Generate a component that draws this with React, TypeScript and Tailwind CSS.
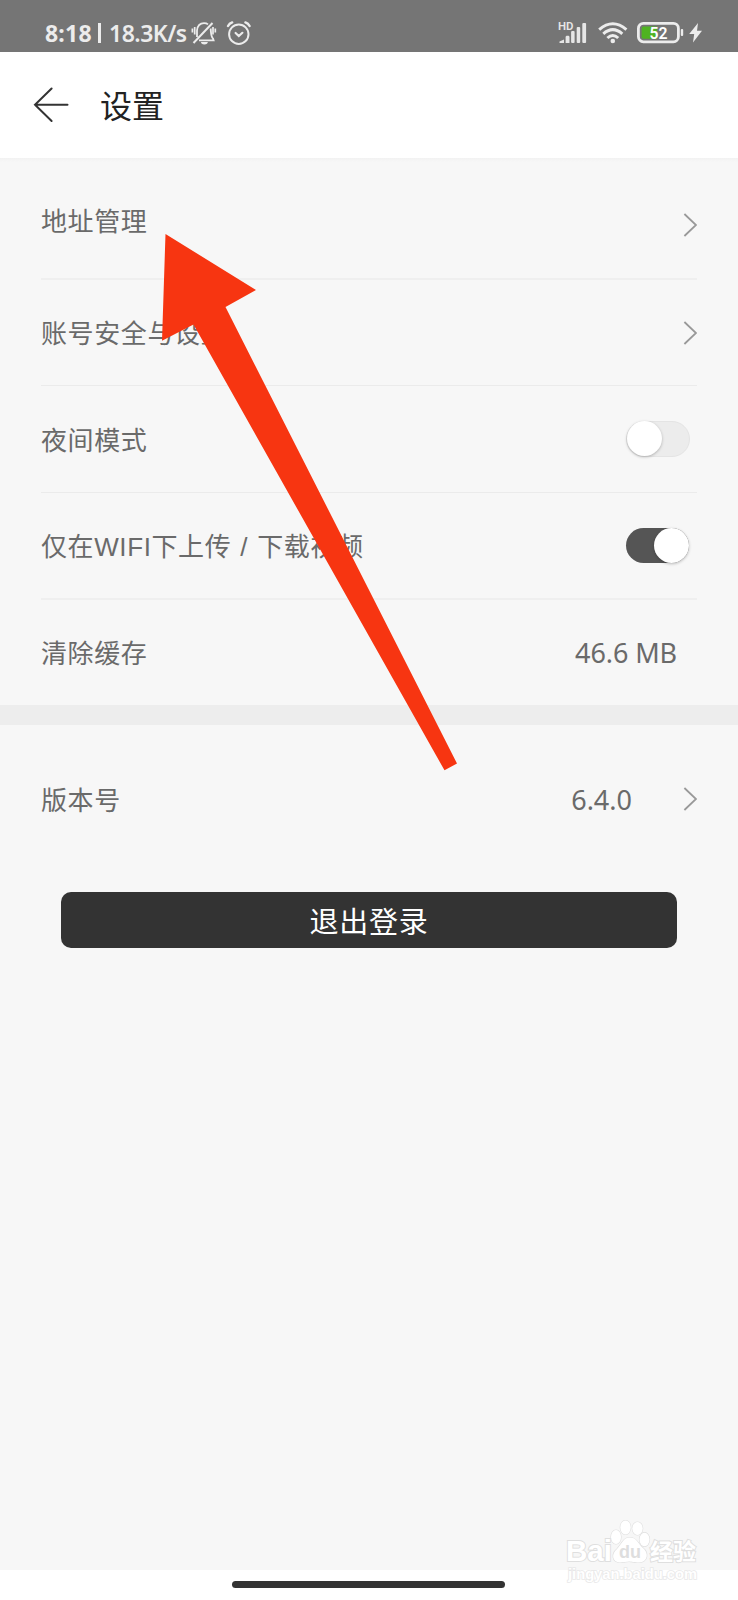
import type { ReactNode } from "react";

function StatusBar() {
  return (
    <div className="flex h-[52px] shrink-0 items-start justify-between bg-[#757575] pl-[45px] pr-[35px] pt-[20px] text-[#ececec]">
      <div className="flex h-[26px] items-center">
        <span className="w-[48px] whitespace-nowrap text-[23px] leading-none font-bold tracking-[0.2px]">8:18</span>
        <span className="ml-[5px] mr-[8px] h-[20px] w-[3px] bg-[#ececec]" />
        <span className="w-[81px] whitespace-nowrap text-[23px] leading-none font-semibold tracking-[-0.5px]">18.3K/s</span>
        <svg width="26" height="26" viewBox="0 0 26 26" fill="none" stroke="#ececec" strokeWidth="1.8" className="ml-[1px]">
          <path d="M2.5 23 L21.5 3" strokeWidth="2" />
          <path d="M6 17 V10.5 C6.5 6 9 3.2 13 3.2 C14.7 3.2 16 3.6 17 4.4" />
          <path d="M19.6 8.5 C20.2 12 19.6 16 22 18.5 L22.6 20.4 H8" />
          <path d="M10 22 a3.4 2.4 0 0 0 6.8 0 z" fill="#ececec" stroke="none" />
          <path d="M1.4 8.5 V12.5 M3.7 7 V14.5 M22 7 V14.5 M24.3 8.5 V12.5" strokeWidth="1.7" />
        </svg>
        <svg width="26" height="26" viewBox="0 0 26 26" fill="none" stroke="#ececec" strokeWidth="2" className="ml-[9px]" strokeLinecap="round">
          <circle cx="12.8" cy="14.2" r="9.7" />
          <path d="M9.6 13 L12.8 16 L16.4 12.8" strokeWidth="2.2" />
          <path d="M2 6 Q3.4 3.4 6.2 2.4 M23.6 6 Q22.2 3.4 19.4 2.4" strokeWidth="2.4" />
        </svg>
      </div>
      <div className="flex h-[26px] items-center">
        <svg width="30" height="24" viewBox="0 0 30 24" fill="#e6e6e6" className="-translate-x-px">
          <text x="0" y="9" fontSize="10.5" fontWeight="600" textLength="15.5" lengthAdjust="spacingAndGlyphs" fontFamily="Roboto, sans-serif">HD</text>
          <path d="M1.5 22 V20.5 L6 18.5 V22 Z M7.6 22 V15.8 L8.5 14.8 H10.7 L11.5 15.8 V22 Z" />
          <rect x="13.1" y="10" width="3.5" height="12" rx="1" />
          <rect x="18.7" y="6" width="3.5" height="16" rx="1" />
          <rect x="24.3" y="2" width="3.8" height="20" rx="1" />
        </svg>
        <svg width="30" height="24" viewBox="0 0 30 24" fill="none" stroke="#ececec" strokeWidth="3" className="ml-[9px]">
          <path d="M1.2 8.6 Q14.8 -3.2 28.4 8.6" />
          <path d="M5.3 12.8 Q14.8 4.4 24.3 12.8" />
          <path d="M9.4 17 Q14.8 12 20.2 17" />
          <circle cx="14.8" cy="20" r="2.3" fill="#ececec" stroke="none" />
        </svg>
        <svg width="48" height="24" viewBox="0 0 48 24" className="ml-[9px] -translate-x-px">
          <rect x="2.4" y="2.4" width="40" height="18.4" rx="5" fill="none" stroke="#ececec" strokeWidth="2.8" />
          <path d="M7.4 5.6 H21 V17.8 H7.4 Q5.6 17.8 5.6 16 V7.4 Q5.6 5.6 7.4 5.6 Z" fill="#4fb321" />
          <rect x="44.8" y="8" width="2.4" height="7" rx="1" fill="#ececec" />
          <text x="13.5" y="17.5" fontSize="16" fontWeight="600" textLength="18" lengthAdjust="spacingAndGlyphs" fill="#fff" fontFamily="Roboto, sans-serif">52</text>
        </svg>
        <svg width="14" height="24" viewBox="0 0 14 24" className="ml-[4px]">
          <path d="M9 2 L0.2 13 H5.2 L4 21.5 L13 9.8 H8 Z" fill="#ececec" />
        </svg>
      </div>
    </div>
  );
}

function Header() {
  return (
    <header className="flex h-[106px] shrink-0 items-center bg-white pl-[33px]">
      <svg width="36" height="36" viewBox="0 0 36 36" fill="none" stroke="#333" strokeWidth="2" strokeLinecap="round">
        <path d="M18.6 1.5 L2 17.8 L18.6 34 M2 17.8 H34.5" />
      </svg>
      <h1 className="ml-[31px] pt-[2px] text-[32px] leading-none text-[#222]">设置</h1>
    </header>
  );
}

function Chevron() {
  return (
    <svg width="14" height="24" viewBox="0 0 14 24" fill="none" stroke="#999" strokeWidth="1.8" className="shrink-0">
      <path d="M1.4 1 L13 12 L1.4 23" />
    </svg>
  );
}

function Toggle({ on }: { on?: boolean }) {
  return (
    <div
      className={
        on
          ? "mr-[8px] flex h-[35px] w-[63px] items-center justify-end rounded-full bg-[#555]"
          : "mb-[1px] mr-[7px] flex h-[36px] w-[64px] items-center rounded-full border border-[#e4e4e4] bg-[#ececec]"
      }
    >
      <span className="size-[35px] shrink-0 rounded-full bg-white shadow-[0_1px_3px_rgba(0,0,0,0.25)]" />
    </div>
  );
}

function Row({ label, children, className }: { label: string; children?: ReactNode; className: string }) {
  return (
    <div className={`mx-[41px] flex shrink-0 items-center justify-between ${className}`}>
      <span className="whitespace-pre pt-[3px] font-['Liberation_Sans','Noto_Sans_CJK_SC',sans-serif] text-[26px] leading-none tracking-[0.6px] [word-spacing:1.2px]">
        {label}
      </span>
      {children}
    </div>
  );
}

function Arrow() {
  return (
    <svg width="738" height="1600" viewBox="0 0 738 1600" className="pointer-events-none absolute left-0 top-0">
      <path d="M165.5 234 L256 290 L225.5 307 L457 763.5 L444.5 770.3 L193.5 324.5 L162 340.8 Z" fill="#f73511" />
    </svg>
  );
}

function Watermark() {
  return (
    <svg
      width="150"
      height="74"
      viewBox="0 0 150 74"
      className="pointer-events-none absolute left-[562px] top-[1516px] overflow-visible"
      fill="#fff"
      stroke="#dfdfdf"
      strokeWidth="1.2"
      fontFamily="'Liberation Sans', 'Noto Sans CJK SC', sans-serif"
      paintOrder="stroke"
    >
      <ellipse cx="54" cy="21" rx="5" ry="7" />
      <ellipse cx="63.5" cy="11.5" rx="5.2" ry="7" />
      <ellipse cx="75.5" cy="12.5" rx="5.2" ry="6.5" />
      <ellipse cx="82.5" cy="23.5" rx="5" ry="6.8" />
      <path d="M68 21.5 C75 21.5 76 28 81 32 C87 37 86 46 77 46.5 C72 46.5 70 45.5 67 45.5 C64 45.5 62 46.5 58 46.5 C50 46 49 38 55 33 C60 28 61 21.5 68 21.5 Z" />
      <text x="4" y="45" fontSize="30" fontWeight="700" textLength="46" lengthAdjust="spacingAndGlyphs" strokeWidth="2">Bai</text>
      <text x="57" y="42" fontSize="19" fontWeight="700" textLength="22" lengthAdjust="spacingAndGlyphs" fill="#dedede" stroke="none">du</text>
      <text x="88" y="43.5" fontSize="23" fontWeight="700" textLength="46" lengthAdjust="spacingAndGlyphs" strokeWidth="2">经验</text>
      <text x="6" y="62.5" fontSize="15" fontWeight="700" textLength="129" lengthAdjust="spacingAndGlyphs" stroke="#e8e8e8" strokeWidth="1.6">jingyan.baidu.com</text>
    </svg>
  );
}

export default function App() {
  return (
    <div className="relative flex h-[1600px] w-[738px] flex-col overflow-hidden bg-[#f7f7f7] font-['Noto_Sans','Noto_Sans_CJK_SC',sans-serif] text-[#6a6a6a]">
      <StatusBar />
      <Header />
      <div className="h-[4px] shrink-0 bg-gradient-to-b from-[#f2f2f2] to-[#f7f7f7]" />
      <main className="flex flex-col">
        <Row label="地址管理" className="h-[118px] border-b-2 border-[#efefef]">
          <div className="pt-[10px]"><Chevron /></div>
        </Row>
        <Row label="账号安全与设置" className="h-[106px] border-b border-[#ebebeb]">
          <Chevron />
        </Row>
        <Row label="夜间模式" className="h-[107px] border-b border-[#ebebeb]">
          <Toggle />
        </Row>
        <Row label="仅在WIFI下上传 / 下载视频" className="h-[107px] border-b-2 border-[#efefef]">
          <Toggle on />
        </Row>
        <Row label="清除缓存" className="h-[105px]">
          <span className="mr-[20px] text-[27px] leading-none tracking-[-0.1px]">46.6 MB</span>
        </Row>
        <div className="h-5 bg-[#ededed]" />
        <Row label="版本号" className="h-[149px]">
          <div className="flex items-center gap-[51px]">
            <span className="text-[27px] leading-none">6.4.0</span>
            <div className="pb-[2px]"><Chevron /></div>
          </div>
        </Row>
        <button className="mx-[61px] mt-[18px] flex h-[56px] items-center justify-center rounded-[10px] bg-[#333] pt-[2px] text-[29px] leading-none tracking-[0.8px] text-white">
          退出登录
        </button>
      </main>
      <footer className="mt-auto flex h-[30px] items-start justify-center bg-white pr-[1px] pt-[11px]">
        <div className="h-[7px] w-[273px] rounded-full bg-[#333]" />
      </footer>
      <Watermark />
      <Arrow />
    </div>
  );
}
